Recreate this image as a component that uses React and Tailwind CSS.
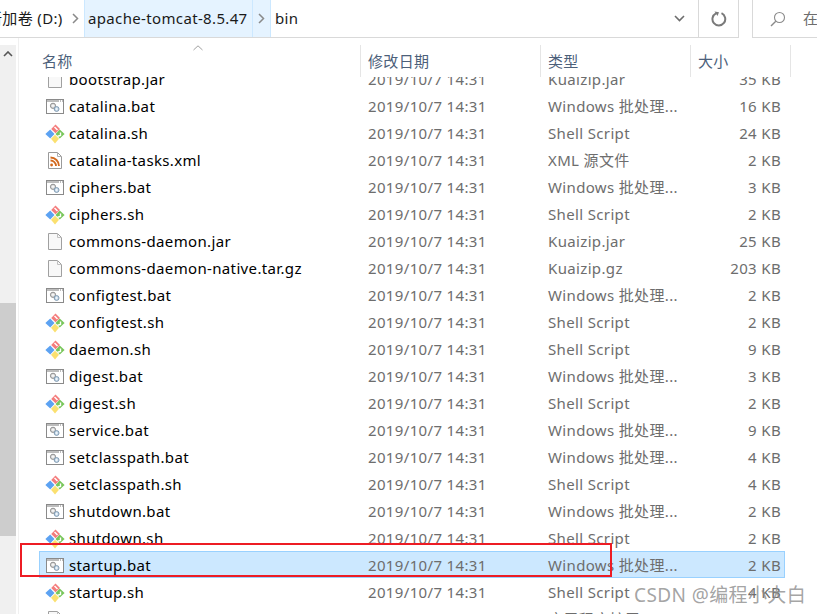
const rows = [
  ["bootstrap.jar", "Kuaizip.jar", "35 KB", "file"],
  ["catalina.bat", "Windows 批处理...", "16 KB", "bat"],
  ["catalina.sh", "Shell Script", "24 KB", "sh"],
  ["catalina-tasks.xml", "XML 源文件", "2 KB", "xml"],
  ["ciphers.bat", "Windows 批处理...", "3 KB", "bat"],
  ["ciphers.sh", "Shell Script", "2 KB", "sh"],
  ["commons-daemon.jar", "Kuaizip.jar", "25 KB", "file"],
  ["commons-daemon-native.tar.gz", "Kuaizip.gz", "203 KB", "file"],
  ["configtest.bat", "Windows 批处理...", "2 KB", "bat"],
  ["configtest.sh", "Shell Script", "2 KB", "sh"],
  ["daemon.sh", "Shell Script", "9 KB", "sh"],
  ["digest.bat", "Windows 批处理...", "3 KB", "bat"],
  ["digest.sh", "Shell Script", "2 KB", "sh"],
  ["service.bat", "Windows 批处理...", "9 KB", "bat"],
  ["setclasspath.bat", "Windows 批处理...", "4 KB", "bat"],
  ["setclasspath.sh", "Shell Script", "4 KB", "sh"],
  ["shutdown.bat", "Windows 批处理...", "2 KB", "bat"],
  ["shutdown.sh", "Shell Script", "2 KB", "sh"],
  ["startup.bat", "Windows 批处理...", "2 KB", "bat", true],
  ["startup.sh", "Shell Script", "4 KB", "sh"],
  ["tcnative-1.dll", "应用程序扩展", "2 KB", "file"],
];

function Icon({ type }) {
  if (type === "bat")
    return (
      <svg width="18" height="15" viewBox="0 0 18 15" fill="none">
        <rect x="0.5" y="0.5" width="17" height="14" fill="#fff" stroke="#8a8a8a" />
        <path d="M1 2h16" stroke="#a8a8a8" strokeWidth="1.6" strokeDasharray="12 1 1 1 1 1" />
        <circle cx="7" cy="6.8" r="2.6" fill="#dedede" stroke="#8f8f8f" />
        <circle cx="7" cy="6.8" r="0.9" fill="#fff" />
        <circle cx="10.6" cy="10" r="2.4" fill="#cfe0ee" stroke="#7d98b0" />
        <circle cx="10.6" cy="10" r="0.8" fill="#fff" />
      </svg>
    );
  if (type === "sh")
    return (
      <svg width="20" height="20" viewBox="0 0 20 20">
        <path d="M10.5 0.5L15 5 10.5 9.2 6.2 5z" fill="#f47c7c" />
        <path d="M5.2 5.6L9.5 10 5.2 14.4 0.4 10z" fill="#5ca2f2" />
        <path d="M14.8 5.6L19.6 10 14.8 14.4 10.5 10z" fill="#78c65a" />
        <path d="M10 10.8L14 14.8 10 19.4 6 14.8z" fill="#fbe06f" />
        <path d="M9.5 3l3 3" stroke="#fff" strokeWidth="1.4" />
        <path d="M15.5 8.5v3l-3 .8" stroke="#fff" strokeWidth="1.4" fill="none" />
      </svg>
    );
  if (type === "xml")
    return (
      <svg width="16" height="19" viewBox="0 0 16 19" fill="none">
        <path d="M1.5 1.5h9l4 4v12h-13z" fill="#fff" stroke="#9a9a9a" />
        <path d="M10.5 1.5v4h4" stroke="#b0b0b0" />
        <circle cx="4.6" cy="14" r="1.4" fill="#d2691e" />
        <path d="M3.5 9.5a5.5 5.5 0 0 1 5.5 5.5M3.5 6.5a8.5 8.5 0 0 1 8.5 8.5" stroke="#d2691e" strokeWidth="1.8" />
      </svg>
    );
  return (
    <svg width="16" height="19" viewBox="0 0 16 19" fill="none">
      <path d="M1.5 1.5h9l4 4v12h-13z" fill="#f8f8f8" stroke="#a0a0a0" />
      <path d="M10.5 1.5v4h4" stroke="#c0c0c0" />
    </svg>
  );
}

function Head({ label, w, pad }) {
  return (
    <div className={`${w} ${pad} h-[32px] flex items-start border-r border-[#e5e5e5] text-[#4c607a]`}>
      <span className="leading-[32px]">{label}</span>
    </div>
  );
}

export default function App() {
  return (
    <div
      className="relative w-[817px] h-[614px] overflow-hidden bg-white text-[15px] tracking-[0.35px] text-black"
      style={{ fontFamily: '"Noto Sans", "Noto Sans CJK SC", sans-serif' }}
    >
      <div className="flex h-[38px]">
        <div className="w-[739px] shrink-0 flex items-stretch h-[38px] border-b border-r border-[#d9d9d9]">
          <span className="w-[76px] -ml-[13px] shrink-0 whitespace-nowrap leading-[37px] text-[#1a1a1a]">新加卷 (D:)</span>
          <div className="w-[21px] pl-[3px] shrink-0 flex items-center justify-center">
            <svg width="7" height="11" viewBox="0 0 7 11" fill="none"><path d="M1 1l4.5 4.5L1 10" stroke="#8a8a8a" strokeWidth="1.5" /></svg>
          </div>
          <div className="flex items-stretch bg-[#e5f3ff] border-x border-[#cce8ff]">
            <span className="w-[168px] pl-[3px] leading-[37px] text-[#1a1a1a] border-r border-[#cce8ff]">apache-tomcat-8.5.47</span>
            <div className="w-[17px] flex items-center justify-center">
              <svg width="7" height="11" viewBox="0 0 7 11" fill="none"><path d="M1 1l4.5 4.5L1 10" stroke="#8a8a8a" strokeWidth="1.5" /></svg>
            </div>
          </div>
          <span className="pl-[4px] leading-[37px] text-[#1a1a1a]">bin</span>
          <div className="flex-1" />
          <div className="w-[39px] flex items-center justify-center border-r border-[#d9d9d9]">
            <svg width="11" height="7" viewBox="0 0 11 7" fill="none"><path d="M1 1l4.5 4.5L10 1" stroke="#6d6d6d" strokeWidth="1.6" /></svg>
          </div>
          <div className="w-[39px] flex items-center justify-center">
            <svg width="16" height="16" viewBox="0 0 16 16" fill="none">
              <path d="M10.5 2.2A6.4 6.4 0 1 1 5 2.3" stroke="#7a7a7a" strokeWidth="2" />
              <path d="M3.5 0.5L8 1.2 6.5 5z" fill="#7a7a7a" />
            </svg>
          </div>
        </div>
        <div className="w-[13px] shrink-0" />
        <div className="w-[65px] shrink-0 h-[38px] border-l border-b border-[#d9d9d9] flex items-center pl-[17px] gap-[17px] whitespace-nowrap text-[#6d6d6d] overflow-hidden">
          <svg className="shrink-0" width="16" height="16" viewBox="0 0 16 16" fill="none">
            <circle cx="9.5" cy="6.5" r="5" stroke="#8a8a8a" strokeWidth="1.1" />
            <path d="M5.8 10.2L1 15" stroke="#8a8a8a" strokeWidth="1.4" />
          </svg>
          <span>在</span>
        </div>
      </div>

      <div className="flex h-[576px]">
        <div className="w-[16px] shrink-0 bg-[#f0f0f0] mt-[7px] flex flex-col">
          <div className="h-[17px] flex items-center justify-center">
            <svg width="10" height="6" viewBox="0 0 10 6" fill="none"><path d="M1 5l4-4 4 4" stroke="#555" strokeWidth="1.6" /></svg>
          </div>
          <div className="mt-[241px] h-[233px] bg-[#cdcdcd]" />
        </div>
        <div className="w-[3px] shrink-0 border-r border-[#f0f0f0]" />
        <div className="flex-1 min-w-0 flex flex-col pl-[20px]">
          <div className="relative flex h-[39px] pt-[7px] shrink-0">
            <svg className="absolute left-[154px] top-[7px]" width="10" height="6" viewBox="0 0 10 6" fill="none"><path d="M0.5 5L5 .8 9.5 5" stroke="#a0a0a0" /></svg>
            <Head label="名称" w="w-[322px]" pad="pl-[3px]" />
            <Head label="修改日期" w="w-[180px]" pad="pl-[7px]" />
            <Head label="类型" w="w-[150px]" pad="pl-[7px]" />
            <Head label="大小" w="w-[100px]" pad="pl-[7px]" />
          </div>
          <div className="flex-1 min-h-0 overflow-hidden">
            <div className="-mt-[12px] w-[746px]">
              {rows.map(([name, type, size, icon, sel]) => (
                <div
                  key={name}
                  className={`flex items-center h-[27px] pt-[2px] border ${sel ? "bg-[#cce8ff] border-[#99d1ff]" : "border-transparent"}`}
                >
                  <div className="w-[29px] shrink-0 flex justify-center pl-[1px]">
                    <Icon type={icon} />
                  </div>
                  <div className="w-[299px] shrink-0 whitespace-nowrap overflow-hidden">{name}</div>
                  <div className="w-[180px] shrink-0 text-[#6d6d6d] whitespace-nowrap">2019/10/7 14:31</div>
                  <div className="w-[135px] shrink-0 text-[#6d6d6d] whitespace-nowrap">{type}</div>
                  <div className="w-[98px] shrink-0 text-right text-[#6d6d6d] whitespace-nowrap">{size}</div>
                </div>
              ))}
            </div>
          </div>
        </div>
      </div>

      <div className="absolute left-[20px] top-[543px] w-[592px] h-[34px] border-2 border-[#ed1c24] pointer-events-none" />
      <div className="absolute left-[634px] top-[582px] text-[19px] tracking-[0.4px] leading-[26px] text-[#8c8c8c]/80 whitespace-nowrap">CSDN @编程小大白</div>
    </div>
  );
}
